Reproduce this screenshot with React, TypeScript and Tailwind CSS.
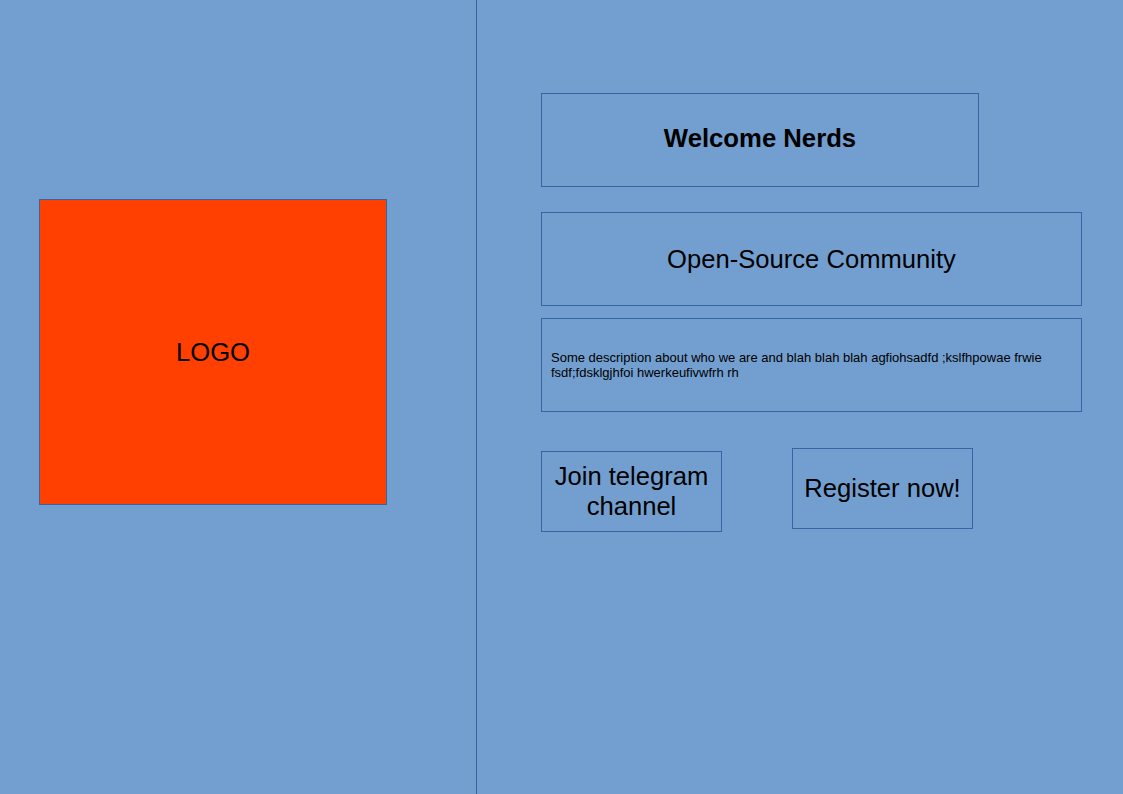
export default function App() {
  return (
    <div className="flex h-[794px] w-[1123px] bg-[#729fcf] text-black" style={{ fontFamily: '"Liberation Sans", Arial, sans-serif' }}>
      <div className="w-[477px] shrink-0 border-r border-[#3465a4] pl-[39px] pt-[199px]">
        <div className="flex h-[306px] w-[348px] items-center justify-center border border-[#3465a4] bg-[#ff4000] text-[25.6px]">
          LOGO
        </div>
      </div>
      <div className="flex flex-col pl-[64px] pt-[93px]">
        <div className="flex h-[94px] w-[438px] items-center justify-center border border-[#3465a4] pb-[3px] text-[25.7px] font-bold">
          Welcome Nerds
        </div>
        <div className="mt-[25px] flex h-[94px] w-[541px] items-center justify-center border border-[#3465a4] text-[25.6px]">
          Open-Source Community
        </div>
        <div className="mt-[12px] flex h-[94px] w-[541px] items-center border border-[#3465a4] px-[9px] text-[13px] leading-[15px]">
          Some description about who we are and blah blah blah agfiohsadfd ;kslfhpowae frwie fsdf;fdsklgjhfoi hwerkeufivwfrh rh
        </div>
        <div className="mt-[36px] flex items-start gap-[70px]">
          <div className="mt-[3px] flex h-[81px] w-[181px] items-center justify-center border border-[#3465a4] pb-[2px] text-center text-[25.6px] leading-[30px]">
            Join telegram<br />channel
          </div>
          <div className="flex h-[81px] w-[181px] items-center justify-center border border-[#3465a4] text-[25.6px]">
            Register now!
          </div>
        </div>
      </div>
    </div>
  );
}
